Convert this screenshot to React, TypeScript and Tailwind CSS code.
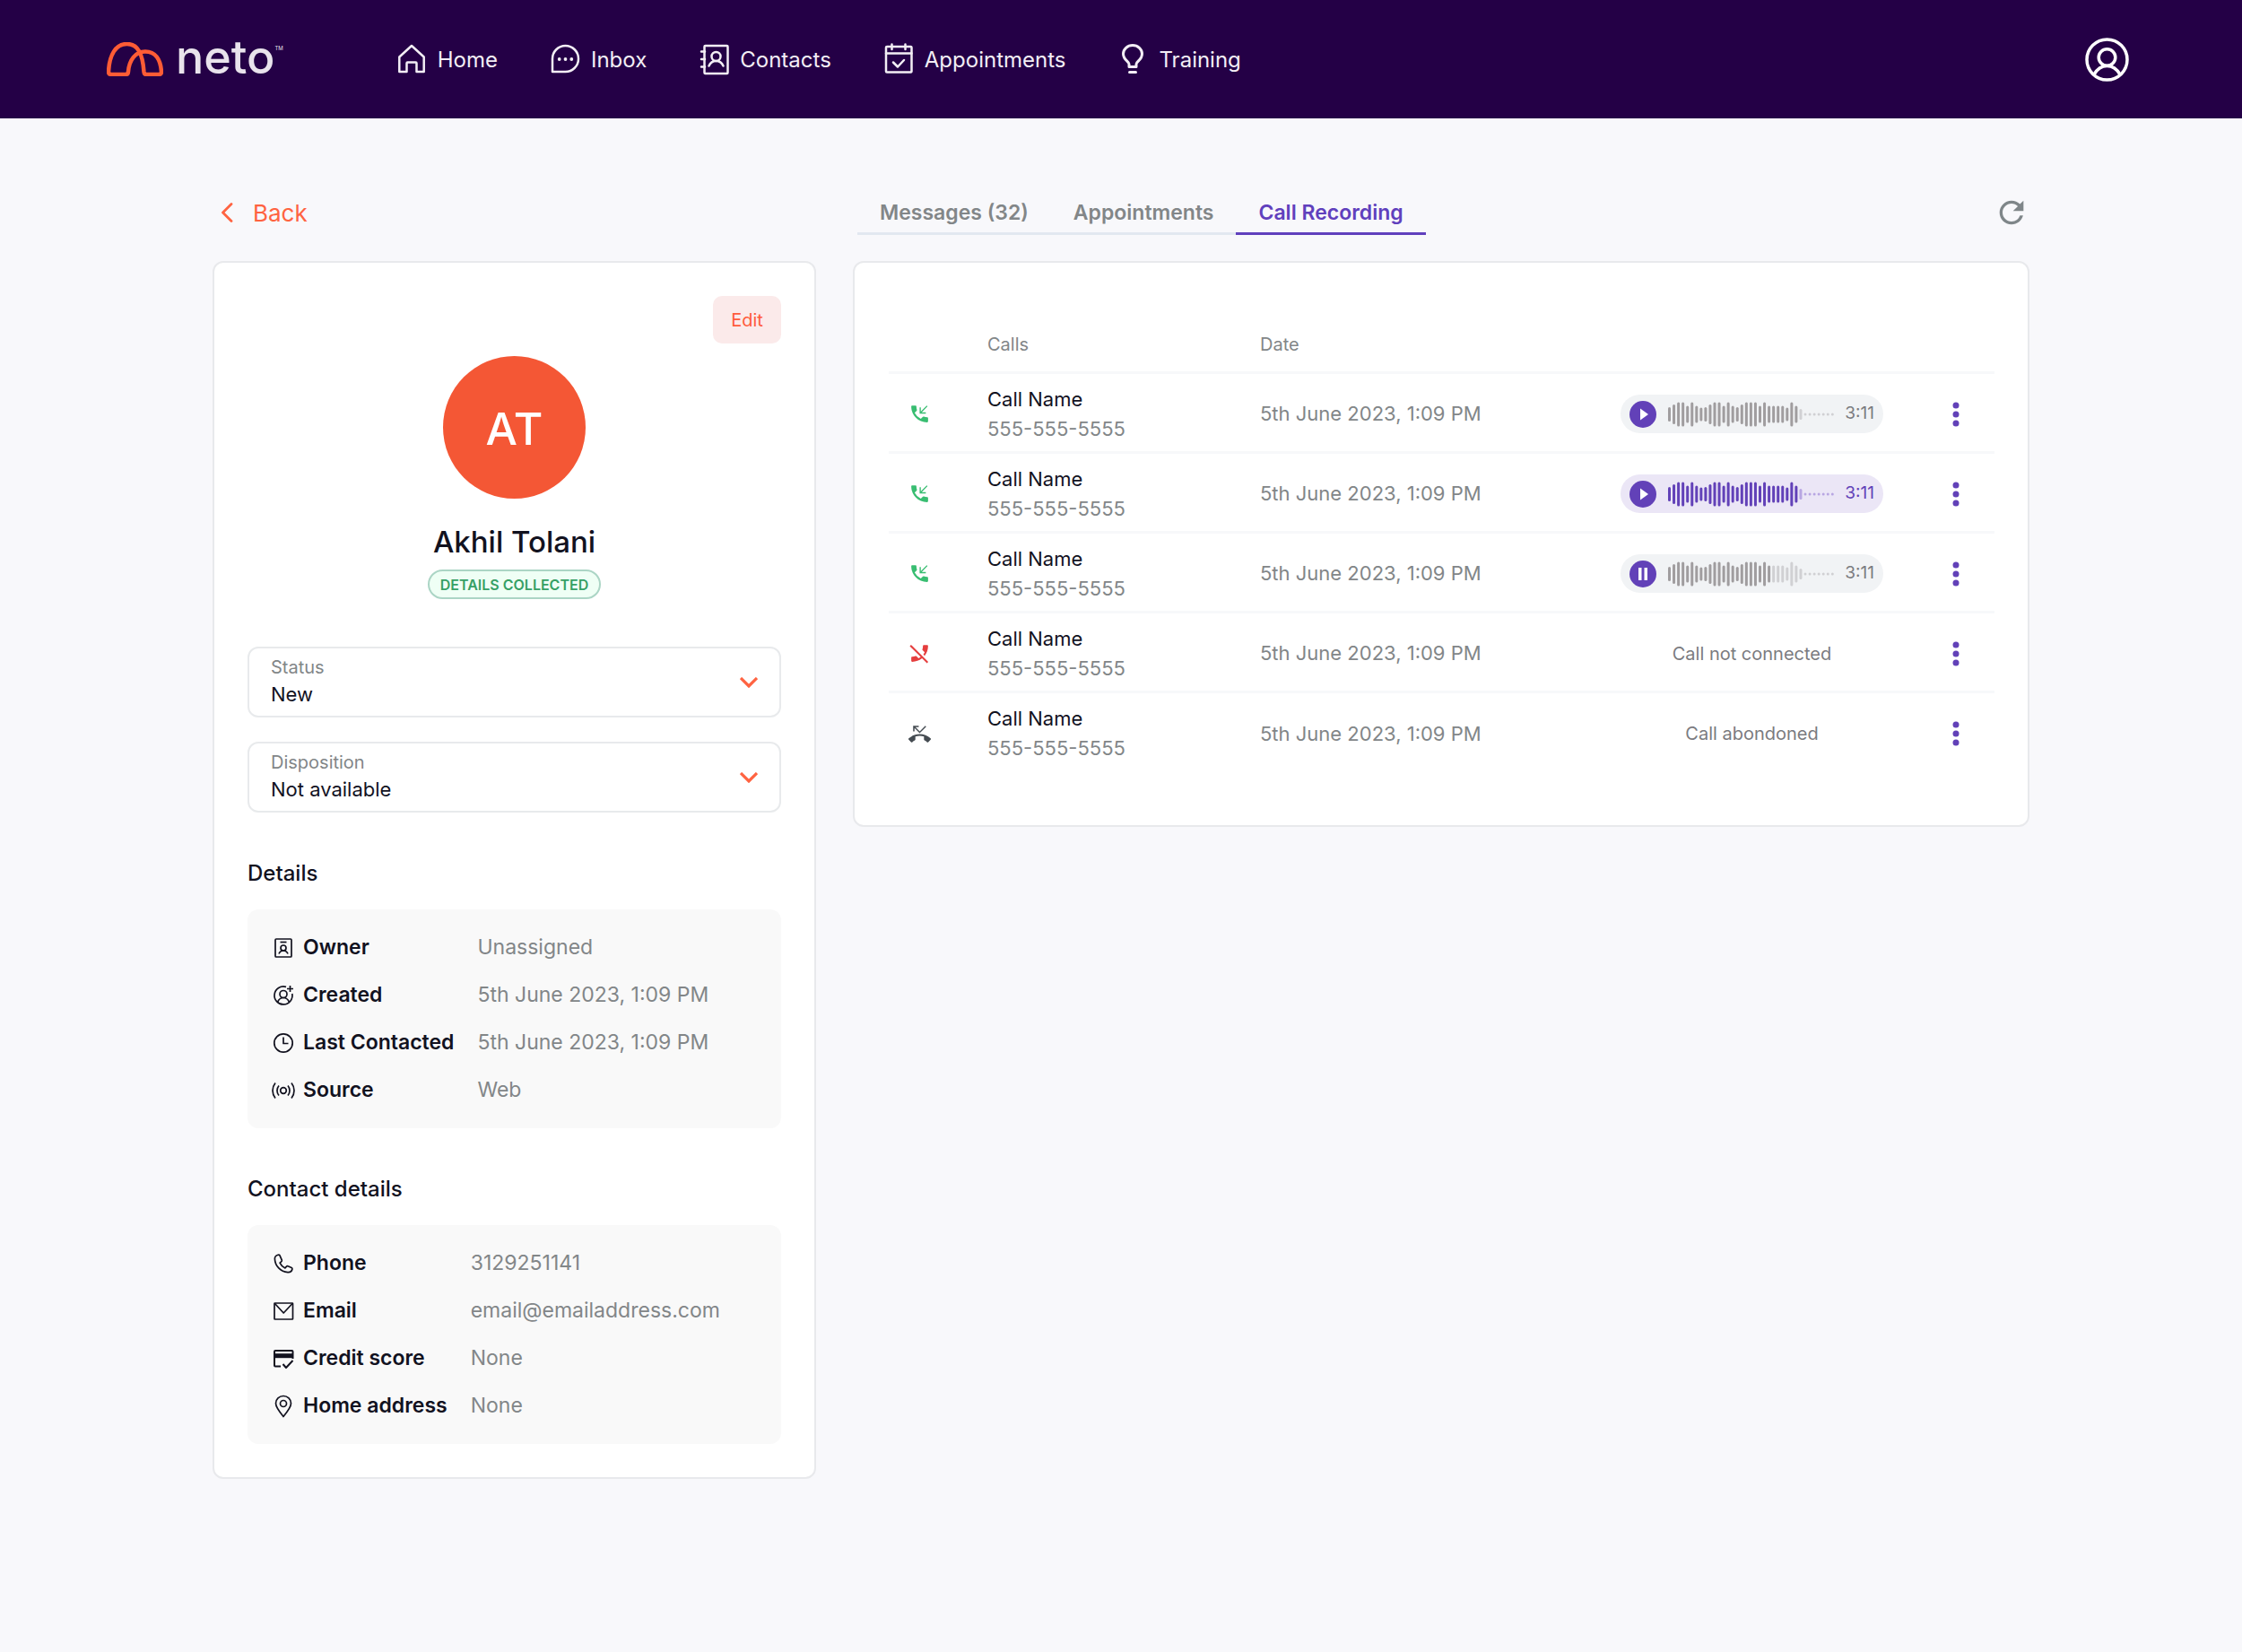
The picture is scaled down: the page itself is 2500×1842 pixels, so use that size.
import { useState, type ReactNode } from "react";
import { MdPhoneDisabled, MdPhoneMissed, MdRefresh } from "react-icons/md";

type CallKind = "received" | "disabled" | "missed";

interface Call {
    id: number;
    kind: CallKind;
    name: string;
    phone: string;
    date: string;
    note?: string;
    player?: {
        duration: string;
        played: number;
        playing?: boolean;
        active?: boolean;
    };
}

const calls: Call[] = [
    {
        id: 1,
        kind: "received",
        name: "Call Name",
        phone: "555-555-5555",
        date: "5th June 2023, 1:09 PM",
        player: { duration: "3:11", played: 29 },
    },
    {
        id: 2,
        kind: "received",
        name: "Call Name",
        phone: "555-555-5555",
        date: "5th June 2023, 1:09 PM",
        player: { duration: "3:11", played: 29, active: true },
    },
    {
        id: 3,
        kind: "received",
        name: "Call Name",
        phone: "555-555-5555",
        date: "5th June 2023, 1:09 PM",
        player: { duration: "3:11", played: 23, playing: true },
    },
    {
        id: 4,
        kind: "disabled",
        name: "Call Name",
        phone: "555-555-5555",
        date: "5th June 2023, 1:09 PM",
        note: "Call not connected",
    },
    {
        id: 5,
        kind: "missed",
        name: "Call Name",
        phone: "555-555-5555",
        date: "5th June 2023, 1:09 PM",
        note: "Call abondoned",
    },
];

// bar heights of the recording preview
const wave = [
    16, 22, 27, 27, 19, 27, 19, 15, 16, 22, 27, 27, 19, 27, 19, 16, 22, 27, 27,
    27, 19, 27, 19, 19, 19, 19, 15, 27, 19, 12, 3, 3, 3, 3, 3, 3, 3,
];

const tabs = ["Messages (32)", "Appointments", "Call Recording"];

function NavIcon({ children, width = 2.5 }: { children: ReactNode; width?: number }) {
    return (
        <svg
            className="size-9 shrink-0"
            viewBox="0 0 36 36"
            fill="none"
            stroke="currentColor"
            strokeWidth={width}
            strokeLinejoin="round"
            strokeLinecap="round"
            aria-hidden="true"
        >
            {children}
        </svg>
    );
}

function RowIcon({ children }: { children: ReactNode }) {
    return (
        <svg
            className="size-[26px] shrink-0"
            viewBox="0 0 26 26"
            fill="none"
            stroke="currentColor"
            strokeWidth={1.7}
            strokeLinejoin="round"
            aria-hidden="true"
        >
            {children}
        </svg>
    );
}

const navItems = [
    {
        label: "Home",
        icon: (
            <NavIcon>
                <path d="M12.5 32h-8.2V15.5L18 3l13.7 12.5V32h-8.2v-9.5a1 1 0 0 0-1-1h-9a1 1 0 0 0-1 1z" />
            </NavIcon>
        ),
    },
    {
        label: "Inbox",
        icon: (
            <NavIcon>
                <path d="M4 32V17.5A14.5 14.5 0 1 1 18.5 32z" />
                <g fill="currentColor" stroke="none">
                    <circle cx="11.7" cy="18" r="1.9" />
                    <circle cx="18.5" cy="18" r="1.9" />
                    <circle cx="25.3" cy="18" r="1.9" />
                </g>
            </NavIcon>
        ),
    },
    {
        label: "Contacts",
        icon: (
            <NavIcon>
                <rect x="7.5" y="3" width="26" height="31" rx="1" />
                <path d="M4 9.500h4M4 18h4M4 26.500h4" />
                <circle cx="20.5" cy="15" r="5" />
                <path d="M12.5 25.500c1.500-3.500 4.500-5.500 8-5.500s6.500 2 8 5.500" />
            </NavIcon>
        ),
    },
    {
        label: "Appointments",
        icon: (
            <NavIcon>
                <rect x="4" y="4" width="28.5" height="28.5" rx="1" />
                <path d="M4 11.500h28.500M10.500 1.500v5.500M25.500 1.500v5.500M12 21.500l5 5 7-7.500" />
            </NavIcon>
        ),
    },
    {
        label: "Training",
        icon: (
            <NavIcon width={3}>
                <path d="M14 26.500v-3c0-3-6.500-4.500-6.500-11.500a10.500 9.500 0 0 1 21 0c0 7-6.500 8.500-6.500 11.500v3z" />
                <path d="M14.500 32.500h7" />
            </NavIcon>
        ),
    },
];

const details = [
    {
        label: "Owner",
        value: "Unassigned",
        icon: (
            <RowIcon>
                <rect x="4" y="3" width="18" height="20" rx="1" />
                <path d="M9.500 6.500h7" />
                <circle cx="13" cy="13" r="3" />
                <path d="M8 19.500c1-2.500 3-3.500 5-3.500s4 1 5 3.500" />
            </RowIcon>
        ),
    },
    {
        label: "Created",
        value: "5th June 2023, 1:09 PM",
        icon: (
            <RowIcon>
                <path d="M16 3.400A10 10 0 1 0 22.800 11" />
                <circle cx="13" cy="11.5" r="4" />
                <path d="M6.500 20.500c1.300-3.300 3.700-5 6.500-5s5.200 1.700 6.500 5M20.500 2v7M17 5.500h7" />
            </RowIcon>
        ),
    },
    {
        label: "Last Contacted",
        value: "5th June 2023, 1:09 PM",
        icon: (
            <RowIcon>
                <circle cx="13" cy="13" r="10.2" />
                <path d="M13 6.500v7h5.500" />
            </RowIcon>
        ),
    },
    {
        label: "Source",
        value: "Web",
        icon: (
            <RowIcon>
                <circle cx="13" cy="13" r="3.3" />
                <path d="M8 7.500c-2.700 3.200-2.700 7.800 0 11M18 7.500c2.700 3.200 2.700 7.800 0 11M4 4.500c-4 5-4 12 0 17M22 4.500c4 5 4 12 0 17" />
            </RowIcon>
        ),
    },
];

const contactDetails = [
    {
        label: "Phone",
        value: "3129251141",
        icon: (
            <RowIcon>
                <path d="M7 3.200c-2.200.6-3.700 2-3.600 4.500.4 8 6.500 14.300 14.500 15 2.700.2 4.500-1.400 5-3.700.1-.7-.2-1.200-.8-1.500l-4-1.800c-.6-.3-1.200-.1-1.600.4l-1.600 1.800c-2.600-1.200-4.600-3.200-5.800-5.800l1.700-1.500c.5-.4.7-1 .4-1.700L9 3.900c-.3-.7-1.200-.9-2-.7z" />
            </RowIcon>
        ),
    },
    {
        label: "Email",
        value: "email@emailaddress.com",
        icon: (
            <RowIcon>
                <rect x="3" y="4" width="20.5" height="18" rx=".5" />
                <path d="M3.500 4.500L13.200 15l9.800-10.500" />
            </RowIcon>
        ),
    },
    {
        label: "Credit score",
        value: "None",
        icon: (
            <RowIcon>
                <path d="M10 21.500H4a1 1 0 0 1-1-1V5a1 1 0 0 1 1-1h18.500a1 1 0 0 1 1 1v8" strokeWidth="2" />
                <path d="M3 9.700h20.500" strokeWidth="5" />
                <path d="M12.500 19l3.500 4 7.500-8" strokeWidth="2" />
            </RowIcon>
        ),
    },
    {
        label: "Home address",
        value: "None",
        icon: (
            <RowIcon>
                <path d="M13 24.500C8 18.500 4.500 14 4.500 9.800a8.500 8.300 0 0 1 17 0c0 4.200-3.500 8.700-8.500 14.700z" />
                <circle cx="13" cy="10" r="3.5" />
            </RowIcon>
        ),
    },
];

function Logo() {
    return (
        <a href="#" aria-label="neto" className="flex items-center">
            <svg className="h-[38px] w-[63px]" viewBox="0 0 63 38" fill="none" aria-hidden="true">
                <path
                    d="M2 33C3 14 10 2 22.500 2S40 13 41.500 33q.3 3 3 3H58q3 0 3-3C60 19 54 10.500 43 10.500S25 20 24 33q-.2 3-3 3H5q-3 0-3-3z"
                    stroke="#ff5c35"
                    strokeWidth="4.500"
                />
            </svg>
            <span className="ml-3.5 pb-1 text-[52px]/10 font-medium text-[#e9e3ec]">neto</span>
            <span className="-mt-6 text-[6px]/3 text-[#e9e3ec]">TM</span>
        </a>
    );
}

function SelectBox({ id, label, options }: { id: string; label: string; options: string[] }) {
    return (
        <div className="relative rounded-xl border-2 border-[#e8eaec] pt-[7px] pr-14 pb-2 pl-6">
            <label htmlFor={id} className="block text-xl/7 text-[#828688]">
                {label}
            </label>
            <select
                id={id}
                className="block h-8 w-full appearance-none bg-transparent text-[22px] text-[#12121f] outline-none"
            >
                {options.map((option) => (
                    <option key={option}>{option}</option>
                ))}
            </select>
            <svg
                className="pointer-events-none absolute top-8 right-6 h-3 w-5 text-[#ff6341]"
                viewBox="0 0 20 12"
                fill="none"
                stroke="currentColor"
                strokeWidth="3.200"
                aria-hidden="true"
            >
                <path d="M1 1l9 9 9-9" />
            </svg>
        </div>
    );
}

function DetailList({
    title,
    rows,
}: {
    title: string;
    rows: { label: string; value: string; icon: ReactNode }[];
}) {
    return (
        <section className="mt-[52px]">
            <h2 className="text-2xl/8 font-medium text-[#12121f]">{title}</h2>
            <dl className="mt-6 grid grid-cols-[max-content_1fr] gap-x-[26px] rounded-xl bg-[#f9f9f9] px-[27px] py-4 text-[23px]">
                {rows.map((row) => (
                    <div key={row.label} className="contents">
                        <dt className="flex h-[53px] items-center gap-[9px] font-semibold text-[#12121f]">
                            {row.icon}
                            {row.label}
                        </dt>
                        <dd className="flex h-[53px] items-center text-[#828688]">{row.value}</dd>
                    </div>
                ))}
            </dl>
        </section>
    );
}

function CallIcon({ kind }: { kind: CallKind }) {
    if (kind === "disabled") {
        return <MdPhoneDisabled className="size-[25px] text-[#e53e3e]" />;
    }
    if (kind === "missed") {
        return <MdPhoneMissed className="size-[25px] text-[#454c52]" />;
    }
    return (
        <svg className="size-[25px] text-[#38bd71]" viewBox="0 0 24 24" fill="none" aria-hidden="true">
            <path
                fill="currentColor"
                d="M20 15.500c-1.250 0-2.450-.2-3.570-.57a1.020 1.020 0 0 0-1.020.24l-2.200 2.200a15.045 15.045 0 0 1-6.590-6.590l2.200-2.210a.96.96 0 0 0 .25-1A11.360 11.360 0 0 1 8.500 4c0-.55-.45-1-1-1H4c-.55 0-1 .45-1 1 0 9.390 7.610 17 17 17 .55 0 1-.45 1-1v-3.500c0-.55-.45-1-1-1z"
            />
            <path d="M20 3.500L12.600 11M12.600 5v6h6" stroke="currentColor" strokeWidth="1.300" />
        </svg>
    );
}

function Player({ player }: { player: NonNullable<Call["player"]> }) {
    return (
        <div
            className={`flex h-[43px] w-[293px] items-center rounded-full px-2.5 ${
                player.active ? "bg-[#ebe6f6] text-[#6241b8]" : "bg-[#f1f3f5] text-[#7b7b80]"
            }`}
        >
            <button
                type="button"
                aria-label={player.playing ? "Pause" : "Play"}
                className="flex size-[30px] items-center justify-center rounded-full bg-[#6241b8] text-white"
            >
                <svg className="size-[30px]" viewBox="0 0 30 30" fill="currentColor" aria-hidden="true">
                    {player.playing ? (
                        <path d="M10 8h3.500v14H10zM16.500 8H20v14h-3.500z" />
                    ) : (
                        <path d="M12 8.500v13l9-6.500z" />
                    )}
                </svg>
            </button>
            <svg className="ml-[13px] h-7 w-[186px]" viewBox="0 0 186 28" aria-hidden="true">
                {wave.map((height, i) => {
                    const played = i < player.played;
                    const fill = player.active
                        ? played
                            ? "#6241b8"
                            : "#b8a6e2"
                        : played
                          ? "#a09d9f"
                          : "#d0d0d3";
                    return (
                        <rect
                            key={i}
                            x={i * 5.05}
                            y={14 - height / 2}
                            width={3}
                            height={height}
                            rx={1.5}
                            fill={fill}
                        />
                    );
                })}
            </svg>
            <span className="ml-auto text-[19px]">{player.duration}</span>
        </div>
    );
}

export default function App() {
    const [activeTab, setActiveTab] = useState("Call Recording");

    return (
        <div className="min-h-screen bg-[#f8f8fb] font-['Inter',sans-serif]">
            <header className="flex h-[132px] items-center bg-[#240046] pr-[126px] pl-[119px]">
                <Logo />
                <nav className="ml-[125px] flex items-center gap-[57px] text-[#f3eef5]">
                    {navItems.map((item) => (
                        <a key={item.label} href="#" className="flex items-center gap-[11px] text-2xl">
                            {item.icon}
                            <span className="pt-0.5">{item.label}</span>
                        </a>
                    ))}
                </nav>
                <button type="button" aria-label="Account" className="ml-auto text-white">
                    <svg
                        className="size-[49px]"
                        viewBox="0 0 49 49"
                        fill="none"
                        stroke="currentColor"
                        strokeWidth="3.500"
                        aria-hidden="true"
                    >
                        <circle cx="24.5" cy="24.5" r="22.5" />
                        <circle cx="24.5" cy="22" r="9.3" />
                        <path d="M10 41c3.500-6 8.500-9.500 14.500-9.500S35.500 35 39 41" />
                    </svg>
                </button>
            </header>

            <main className="flex items-start gap-[41px] px-[237px] pt-20">
                <div className="w-[673px] shrink-0">
                    <a href="#" className="flex h-[50px] items-center gap-[22px] pl-[9px] text-[26px] text-[#ff6341]">
                        <svg
                            className="h-[22px] w-3.5"
                            viewBox="0 0 14 22"
                            fill="none"
                            stroke="currentColor"
                            strokeWidth="2.800"
                            strokeLinecap="round"
                            strokeLinejoin="round"
                            aria-hidden="true"
                        >
                            <path d="M12 1.500L2.500 11l9.500 9.500" />
                        </svg>
                        Back
                    </a>

                    <div className="mt-[29px] rounded-xl border-2 border-[#e8e9ec] bg-white p-[37px]">
                        <div className="flex justify-end">
                            <button
                                type="button"
                                className="h-[53px] w-[76px] rounded-[10px] bg-[#fbeaea] text-xl text-[#ff5c3b]"
                            >
                                Edit
                            </button>
                        </div>

                        <div className="mt-3.5 flex flex-col items-center">
                            <div className="flex size-[159px] items-center justify-center rounded-full bg-[#f45735] pt-1 text-[50px] font-medium text-white">
                                AT
                            </div>
                            <h1 className="mt-7 text-[33px]/10 font-medium text-[#12121f]">Akhil Tolani</h1>
                            <span className="mt-[11px] flex h-[33px] items-center rounded-full border-2 border-[#abd5c5] bg-[#effff5] px-3 text-base font-semibold text-[#36a065]">
                                DETAILS COLLECTED
                            </span>
                        </div>

                        <div className="mt-[53px] flex flex-col gap-[27px]">
                            <SelectBox id="status" label="Status" options={["New"]} />
                            <SelectBox id="disposition" label="Disposition" options={["Not available"]} />
                        </div>

                        <DetailList title="Details" rows={details} />
                        <DetailList title="Contact details" rows={contactDetails} />
                    </div>
                </div>

                <div className="min-w-0 flex-1">
                    <div className="flex h-[50px] items-center justify-between pl-[5px]">
                        <div role="tablist" className="flex">
                            {tabs.map((tab) => (
                                <button
                                    key={tab}
                                    type="button"
                                    role="tab"
                                    aria-selected={tab === activeTab}
                                    onClick={() => setActiveTab(tab)}
                                    className={`h-[50px] border-b-3 px-[25px] pt-1 text-[23px] font-semibold ${
                                        tab === activeTab
                                            ? "border-[#6040bd] text-[#6040bd]"
                                            : "border-[#e2e8f0] text-[#828688]"
                                    }`}
                                >
                                    {tab}
                                </button>
                            ))}
                        </div>
                        <button type="button" aria-label="Refresh" className="text-[#7f8689]">
                            <MdRefresh className="size-10" />
                        </button>
                    </div>

                    <div className="mt-[29px] rounded-xl border-2 border-[#e8e9ec] bg-white pt-[53px] pr-[37px] pb-[60px] pl-[38px]">
                        <table className="w-full table-fixed border-collapse text-left text-[22px] text-[#828688]">
                            <colgroup>
                                <col className="w-[110px]" />
                                <col className="w-[304px]" />
                                <col />
                                <col className="w-[293px]" />
                                <col className="w-[124px]" />
                            </colgroup>
                            <thead>
                                <tr className="h-[69px] text-xl">
                                    <th />
                                    <th className="pt-2 font-normal">Calls</th>
                                    <th className="pt-2 font-normal">Date</th>
                                    <th />
                                    <th />
                                </tr>
                            </thead>
                            <tbody>
                                {calls.map((call) => (
                                    <tr key={call.id} className="h-[89px] border-t-3 border-[#f7f8fa] [&>td]:pt-1">
                                        <td className="pl-[22px]">
                                            <CallIcon kind={call.kind} />
                                        </td>
                                        <td>
                                            <div className="leading-[33px] text-[#12121f]">{call.name}</div>
                                            <div className="leading-[33px]">{call.phone}</div>
                                        </td>
                                        <td>{call.date}</td>
                                        <td className="text-center text-xl text-[#7b7b80]">
                                            {call.player ? <Player player={call.player} /> : call.note}
                                        </td>
                                        <td className="pr-[27px]">
                                            <button
                                                type="button"
                                                aria-label="More options"
                                                className="ml-auto flex h-10 w-8 items-center justify-center text-[#6241b8]"
                                            >
                                                <svg
                                                    className="h-7 w-2"
                                                    viewBox="0 0 8 28"
                                                    fill="currentColor"
                                                    aria-hidden="true"
                                                >
                                                    <circle cx="4" cy="4" r="3.5" />
                                                    <circle cx="4" cy="14" r="3.5" />
                                                    <circle cx="4" cy="24" r="3.5" />
                                                </svg>
                                            </button>
                                        </td>
                                    </tr>
                                ))}
                            </tbody>
                        </table>
                    </div>
                </div>
            </main>
        </div>
    );
}
